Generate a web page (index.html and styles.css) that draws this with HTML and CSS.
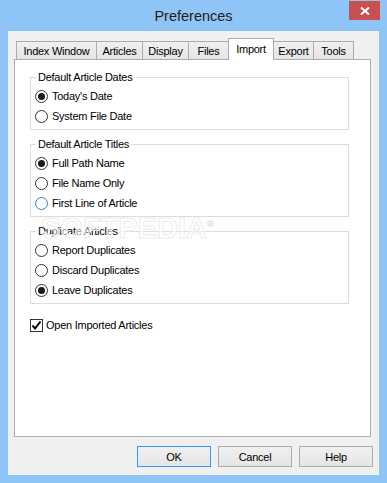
FILE: index.html
```html
<!DOCTYPE html>
<html lang="en">
<head>
    <meta charset="UTF-8">
    <meta name="viewport" content="width=device-width, initial-scale=1.0">
    <title>Preferences</title>
    <link rel="stylesheet" href="styles.css">
</head>
<body>
    <div class="window">
        <div class="titlebar">
            <span></span>
            <div class="title">Preferences</div>
            <div class="close">
                <svg width="10" height="8" viewBox="0 0 10 8">
                    <path d="M1 0.5 L9 7.5 M9 0.5 L1 7.5" stroke="#fff" stroke-width="2"/>
                </svg>
            </div>
        </div>
        <div class="client">
            <div class="tabs">
                <div class="tab" style="width: 81px">Index Window</div>
                <div class="tab" style="width: 47px">Articles</div>
                <div class="tab" style="width: 47px">Display</div>
                <div class="tab" style="width: 41px">Files</div>
                <div class="tab active" style="width: 46px">Import</div>
                <div class="tab" style="width: 41px">Export</div>
                <div class="tab" style="width: 41px">Tools</div>
            </div>
            <div class="panel">
                <fieldset class="group">
                    <legend>Default Article Dates</legend>
                    <div class="option"><span class="radio checked"></span>Today's Date</div>
                    <div class="option"><span class="radio"></span>System File Date</div>
                </fieldset>
                <fieldset class="group">
                    <legend>Default Article Titles</legend>
                    <div class="option"><span class="radio checked"></span>Full Path Name</div>
                    <div class="option"><span class="radio"></span>File Name Only</div>
                    <div class="option"><span class="radio hot"></span>First Line of Article</div>
                </fieldset>
                <fieldset class="group">
                    <legend>Duplicate Articles</legend>
                    <div class="option"><span class="radio"></span>Report Duplicates</div>
                    <div class="option"><span class="radio"></span>Discard Duplicates</div>
                    <div class="option"><span class="radio checked"></span>Leave Duplicates</div>
                </fieldset>
                <div class="option check-row">
                    <span class="checkbox">
                        <svg width="11" height="11" viewBox="0 0 11 11">
                            <path d="M1.5 5.5 L4 8.5 L9.5 1.5" fill="none" stroke="#000" stroke-width="2"/>
                        </svg>
                    </span>Open Imported Articles
                </div>
                <div class="watermark">SOFTPEDIA<sup>&reg;</sup></div>
            </div>
            <div class="buttons">
                <button class="btn default">OK</button>
                <button class="btn">Cancel</button>
                <button class="btn">Help</button>
            </div>
        </div>
    </div>
</body>
</html>
```

FILE: styles.css
```css
body {
    margin: 0;
    padding: 0;
    font-family: "Liberation Sans", Arial, sans-serif;
    font-size: 11px;
    letter-spacing: -0.25px;
    color: #000;
    background-color: #8ec5f6;
}
.window {
    width: 387px;
    height: 483px;
    background-color: #8ec5f6;
}
.titlebar {
    height: 31px;
    display: grid;
    grid-template-columns: 1fr auto 1fr;
    align-items: center;
}
.title {
    font-size: 14.5px;
    letter-spacing: 0;
    color: #1e1e1e;
}
.close {
    justify-self: end;
    align-self: start;
    margin-top: 1px;
    margin-right: 7px;
    width: 31px;
    height: 19px;
    background-color: #c75050;
    display: flex;
    align-items: center;
    justify-content: center;
}
.client {
    margin: 0 8px;
    height: 444px;
    box-sizing: border-box;
    padding: 0 6px 8px 6px;
    background-color: #f0f0f0;
}
.tabs {
    height: 28px;
    display: flex;
    align-items: flex-end;
    padding-left: 2px;
}
.tab {
    box-sizing: border-box;
    height: 18px;
    margin-right: -1px;
    border: 1px solid #acacac;
    border-bottom: none;
    background: linear-gradient(#f0f0f0, #e5e5e5);
    display: flex;
    align-items: center;
    justify-content: center;
    white-space: nowrap;
}
.tab.active {
    height: 22px;
    margin-bottom: -1px;
    padding-bottom: 2px;
    background: #fff;
    position: relative;
    z-index: 1;
}
.panel {
    position: relative;
    box-sizing: border-box;
    width: 357px;
    height: 378px;
    padding: 11px 21px 0 15px;
    border: 1px solid #acacac;
    background-color: #fff;
}
.group {
    margin: 0;
    padding: 2px 6px 3px 4px;
    border: 1px solid #dcdcdc;
    min-width: 0;
}
.group + .group {
    margin-top: 8px;
}
.group legend {
    line-height: 13px;
    padding: 0 2px;
    margin-left: 1px;
}
.option {
    height: 20px;
    display: flex;
    align-items: center;
    white-space: nowrap;
}
.radio {
    box-sizing: border-box;
    width: 13px;
    height: 13px;
    margin-right: 4px;
    border: 1px solid #333;
    border-radius: 50%;
    background-color: #fff;
    display: flex;
    align-items: center;
    justify-content: center;
}
.radio.checked::after {
    content: "";
    width: 7px;
    height: 7px;
    border-radius: 50%;
    background-color: #1a1a1a;
}
.radio.hot {
    border-color: #3c7fb1;
}
.check-row {
    margin-top: 11px;
}
.checkbox {
    box-sizing: border-box;
    width: 13px;
    height: 13px;
    margin-right: 3px;
    border: 1px solid #333;
    background-color: #fff;
    display: flex;
    align-items: center;
    justify-content: center;
}
.watermark {
    position: absolute;
    left: 26px;
    top: 157px;
    font-size: 29px;
    line-height: 22px;
    letter-spacing: 0;
    font-weight: bold;
    color: rgba(255, 255, 255, 0.5);
    -webkit-text-stroke: 1px #ededed;
    pointer-events: none;
}
.watermark sup {
    font-size: 9px;
    line-height: 0;
    -webkit-text-stroke: 0.6px #e6e6e6;
}
.buttons {
    margin-top: 9px;
    display: flex;
    justify-content: flex-end;
    gap: 7px;
}
.btn {
    box-sizing: border-box;
    width: 74px;
    height: 21px;
    padding: 0;
    border: 1px solid #acacac;
    background: linear-gradient(#f0f0f0, #e5e5e5);
    font-family: "Liberation Sans", Arial, sans-serif;
    font-size: 11px;
    letter-spacing: -0.25px;
    color: #000;
}
.btn.default {
    border-color: #3399ff;
}
```
